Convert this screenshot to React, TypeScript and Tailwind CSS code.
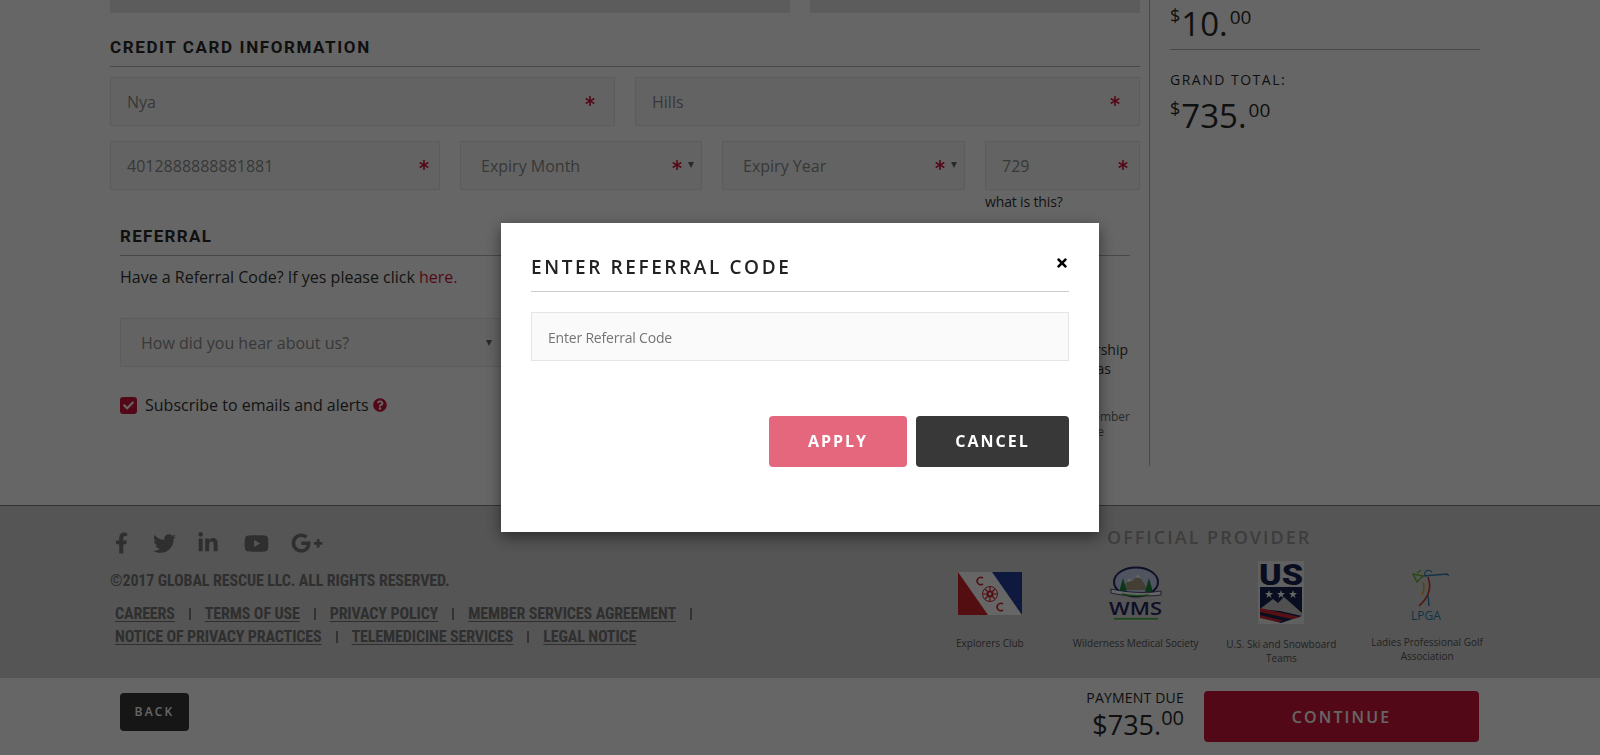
import { FaAsterisk, FaCheck, FaFacebookF, FaGooglePlusG, FaLinkedinIn, FaQuestionCircle, FaTimes, FaTwitter, FaYoutube } from "react-icons/fa";

function Req() {
  return <FaAsterisk className="text-[#d0163a] shrink-0" size={10} />;
}

function Caret() {
  return <span className="ml-[6px] w-0 h-0 border-x-[3px] border-x-transparent border-t-[6px] border-t-[#666] shrink-0" />;
}

function Field({ label, w, select, pad = "pl-[16px]", pr = "pr-[19px]" }: { label: string; w: string; select?: boolean; pad?: string; pr?: string }) {
  return (
    <div className={`${w} h-[49px] flex items-center ${pad} ${pr} bg-[#f8f8f8] border border-[#e5e5e5] text-[16px] text-[#8c8c8c]`}>
      <span className="flex-1">{label}</span>
      <span className="flex items-center -mt-[1px]">
        <Req />
        {select && <Caret />}
      </span>
    </div>
  );
}

function Price({ big, cents, dollarTop, centsTop }: { big: string; cents: string; dollarTop: string; centsTop: string }) {
  return (
    <div className="flex items-start font-medium text-[#2a2a2a]">
      <span className={`text-[18px] leading-[18px] ${dollarTop}`}>$</span>
      <span className="text-[33px] leading-[32px] ml-px">{big}.</span>
      <span className={`text-[19px] leading-[18px] ml-[2px] ${centsTop}`}>{cents}</span>
    </div>
  );
}

function Sep() {
  return <span className="mx-[14px] w-[2px] h-[12px] bg-[#808080]" />;
}

function FooterLink({ children }: { children: string }) {
  return <a className="underline underline-offset-2 decoration-1">{children}</a>;
}

function ExplorersLogo() {
  return (
    <svg width="64" height="43" viewBox="0 0 64 43" className="block">
      <rect width="64" height="43" fill="#fff" />
      <polygon points="0,0 30,43 0,43" fill="#d0252c" />
      <polygon points="34,0 64,0 64,43" fill="#27409f" />
      <circle cx="32" cy="22" r="7.5" fill="none" stroke="#d0252c" strokeWidth="1" />
      <circle cx="32" cy="22" r="3.6" fill="#d0252c" />
      <path d="M32 15v14M25 22h14M27 17l10 10M37 17l-10 10" stroke="#d0252c" strokeWidth="1.2" />
      <circle cx="32" cy="22" r="1.4" fill="#fff" />
      <path d="M25 6.2a3.6 3.6 0 1 0 0 5.6M45 32.2a3.6 3.6 0 1 0 0 5.6" fill="none" stroke="#d0252c" strokeWidth="1.5" />
    </svg>
  );
}

function WmsLogo() {
  return (
    <svg width="56" height="56" viewBox="0 0 56 56" className="block">
      <ellipse cx="28" cy="16" rx="22" ry="14.5" fill="#c6d2f0" stroke="#26265f" strokeWidth="2" />
      <path d="M14 24l7-12 4 3 5-7 10 16z" fill="#a89f86" />
      <path d="M18.5 16l2.5-4 3 2.5-2 1zM27 12l3-4 3 4.5-3-1z" fill="#fff" />
      <path d="M11 26l4-14 4 14zM37 26l4-14 4 14z" fill="#1d8a3e" />
      <path d="M3 23c14 3 32 5 50 2v4c-18 2-38 1-50-2z" fill="#fff" stroke="#26265f" strokeWidth="0.8" />
      <path d="M14 28c8 2 18 2 27 1" stroke="#3fae3a" strokeWidth="1.6" fill="none" />
      <text x="1" y="49" fontFamily="'Open Sans',sans-serif" fontWeight="600" fontSize="18" fill="#26265f" textLength="53" lengthAdjust="spacingAndGlyphs">WMS</text>
      <rect x="6" y="52" width="44" height="1.6" fill="#3fae3a" />
    </svg>
  );
}

function UsLogo() {
  return (
    <svg width="46" height="63" viewBox="0 0 46 63" className="block overflow-visible">
      <rect width="46" height="63" fill="#efefef" />
      <text x="1" y="24" fontFamily="'Roboto',sans-serif" fontWeight="900" fontSize="30" fill="#15254f" textLength="44" lengthAdjust="spacingAndGlyphs">US</text>
      <path d="M2 26h42v29L23 62 2 56z" fill="#15254f" />
      <g fill="#fff">
        <polygon points="11,29 12,32 15,32 12.6,34 13.5,37 11,35 8.5,37 9.4,34 7,32 10,32" />
        <polygon points="23,29 24,32 27,32 24.6,34 25.5,37 23,35 20.5,37 21.4,34 19,32 22,32" />
        <polygon points="35,29 36,32 39,32 36.6,34 37.5,37 35,35 32.5,37 33.4,34 31,32 34,32" />
      </g>
      <path d="M2 48l13-10 5 4 6-6 18 16v3L22 50z" fill="#c9c9c9" />
      <path d="M2 47l40 9-8 2L2 51zM2 54l24 6-7 1L2 57z" fill="#d42a34" />
    </svg>
  );
}

function LpgaLogo() {
  return (
    <svg width="44" height="60" viewBox="0 0 44 60" className="block">
      <path d="M18 11l24-2 2 2" stroke="#2b7fb0" strokeWidth="1.5" fill="none" />
      <path d="M20 10c-1-5 4-6 7-3" stroke="#2b7fb0" strokeWidth="1.2" fill="none" />
      <path d="M8 9l10 2-6 6z" fill="none" stroke="#6fb23c" strokeWidth="1.5" />
      <path d="M12 8l4-3" stroke="#6fb23c" strokeWidth="1.3" />
      <path d="M23 12c4 11 0 21-9 29" stroke="#d0382f" strokeWidth="1.6" fill="none" />
      <path d="M18 17c2 5 1 9-1 13" stroke="#e0a92c" strokeWidth="1.6" fill="none" />
      <path d="M23 30l1 11" stroke="#2b7fb0" strokeWidth="1.4" />
      <text x="21" y="55" textAnchor="middle" fontFamily="'Open Sans',sans-serif" fontSize="12" fill="#2b7fb0">LPGA</text>
    </svg>
  );
}

function Provider({ name, children, logoTop, capTop }: { name: string; children: React.ReactNode; logoTop: string; capTop: string }) {
  return (
    <div className="w-[146px] flex flex-col items-center px-[8px]">
      <div className={`h-[87px] ${logoTop}`}>{children}</div>
      <div className={`${capTop} text-[10px] leading-[14px] text-center text-[#555]`}>{name}</div>
    </div>
  );
}

export default function App() {
  return (
    <div className="h-screen overflow-hidden bg-white font-['Open_Sans',sans-serif] text-[#333]">
      <div className="flex h-[505px] pl-[110px]">
        <div className="w-[1030px]">
          <div className="flex gap-[20px] h-[13px]">
            <div className="w-[680px] bg-[#e6e6e6]" />
            <div className="flex-1 bg-[#e6e6e6]" />
          </div>
          <div className="h-[54px] flex items-end pb-[7px] border-b border-[#b5b5b5] font-['Roboto',sans-serif] font-bold text-[17px] leading-[24px] tracking-[1.6px] text-[#2a2a2a]">
            CREDIT CARD INFORMATION
          </div>
          <div className="flex gap-[20px] mt-[10px]">
            <Field label="Nya" w="w-[505px]" />
            <Field label="Hills" w="w-[505px]" />
          </div>
          <div className="flex gap-[20px] mt-[15px]">
            <Field label="4012888888881881" w="w-[330px]" pr="pr-[10px]" />
            <Field label="Expiry Month" w="w-[242px]" select pad="pl-[20px]" pr="pr-[7px]" />
            <Field label="Expiry Year" w="w-[243px]" select pad="pl-[20px]" pr="pr-[7px]" />
            <Field label="729" w="w-[155px]" pr="pr-[11px]" />
          </div>
          <div className="pl-[875px] mt-[2px] text-[14px] leading-[20px] tracking-[-0.15px] text-[#333]">what is this?</div>
          <div className="ml-[10px] mr-[10px]">
            <div className="h-[44px] flex items-end pb-[7px] border-b border-[#b5b5b5] font-['Roboto',sans-serif] font-bold text-[17px] leading-[24px] tracking-[1.3px] text-[#2a2a2a]">
              REFERRAL
            </div>
            <div className="flex justify-between">
              <div className="w-[400px]">
                <p className="mt-[10px] text-[16px] leading-[22px]">
                  Have a Referral Code? If yes please click <a className="text-[#d0163a]">here.</a>
                </p>
                <div className="mt-[30px] h-[49px] flex items-center justify-between pl-[20px] pr-[27px] bg-[#f8f8f8] border border-[#e5e5e5] text-[16px] text-[#8c8c8c]">
                  How did you hear about us?
                  <Caret />
                </div>
                <label className="mt-[29px] flex items-center text-[16px] leading-[18px]">
                  <span className="w-[17px] h-[17px] rounded-[3px] bg-[#d0163a] flex items-center justify-center">
                    <FaCheck className="text-white" size={11} />
                  </span>
                  <span className="ml-[8px]">Subscribe to emails and alerts</span>
                  <FaQuestionCircle className="ml-[4px] text-[#d0163a]" size={14} />
                </label>
              </div>
              <div className="pt-[84px] text-right">
                <div className="text-[14px] leading-[19px] mr-[2px]">membership</div>
                <div className="text-[14px] leading-[19px] mr-[19px]">as</div>
                <div className="mt-[31px] text-[12px] leading-[15px] text-[#666]">member</div>
                <div className="text-[12px] leading-[15px] text-[#666] mr-[26px]">the</div>
              </div>
            </div>
          </div>
        </div>
        <div className="ml-[9px] w-[331px] h-[466px] border-l border-[#b5b5b5] pl-[20px]">
          <div className="pt-[8px] h-[50px] border-b border-[#b5b5b5]">
            <Price big="10" cents="00" dollarTop="-mt-[2px]" centsTop="mt-0" />
          </div>
          <div className="mt-[20px] text-[14px] leading-[20px] tracking-[1.5px] text-[#2a2a2a]">GRAND TOTAL:</div>
          <div className="mt-[10px]">
            <Price big="735" cents="00" dollarTop="-mt-px" centsTop="mt-px" />
          </div>
        </div>
      </div>

      <footer className="h-[173px] bg-[#d4d4d4] border-t border-[#808080] flex">
        <div className="w-[917px] pl-[110px] pt-[26px] text-[#757575]">
          <div className="flex items-center pl-[5px] h-[22px]">
            <FaFacebookF size={22} className="w-[13px]" />
            <FaTwitter size={23} className="ml-[25px]" />
            <FaLinkedinIn size={22} className="ml-[21px]" />
            <FaYoutube size={25} className="ml-[25px]" />
            <FaGooglePlusG size={32} className="ml-[22px]" />
          </div>
          <div className="mt-[16px] font-['Roboto_Condensed','Roboto',sans-serif] font-bold text-[16px] leading-[22px] tracking-[-0.13px]">
            ©2017 GLOBAL RESCUE LLC. ALL RIGHTS RESERVED.
          </div>
          <div className="mt-[10px] pl-[5px] font-['Roboto_Condensed','Roboto',sans-serif] font-bold text-[16px] leading-[23px] tracking-[-0.13px]">
            <div className="flex items-center">
              <FooterLink>CAREERS</FooterLink>
              <Sep />
              <FooterLink>TERMS OF USE</FooterLink>
              <Sep />
              <FooterLink>PRIVACY POLICY</FooterLink>
              <Sep />
              <FooterLink>MEMBER SERVICES AGREEMENT</FooterLink>
              <Sep />
            </div>
            <div className="flex items-center">
              <FooterLink>NOTICE OF PRIVACY PRACTICES</FooterLink>
              <Sep />
              <FooterLink>TELEMEDICINE SERVICES</FooterLink>
              <Sep />
              <FooterLink>LEGAL NOTICE</FooterLink>
            </div>
          </div>
        </div>
        <div className="w-[583px] pt-[19px]">
          <div className="pl-[190px] font-semibold text-[18px] leading-[24px] tracking-[2px] text-[#999]">OFFICIAL PROVIDER</div>
          <div className="flex">
            <Provider name="Explorers Club" logoTop="pt-[23px]" capTop="mt-0">
              <ExplorersLogo />
            </Provider>
            <Provider name="Wilderness Medical Society" logoTop="pt-[17px]" capTop="mt-0">
              <WmsLogo />
            </Provider>
            <Provider name="U.S. Ski and Snowboard Teams" logoTop="pt-[12px]" capTop="mt-px">
              <UsLogo />
            </Provider>
            <Provider name="Ladies Professional Golf Association" logoTop="pt-[16px]" capTop="-mt-px">
              <LpgaLogo />
            </Provider>
          </div>
        </div>
      </footer>

      <div className="h-[77px] flex items-start pl-[120px] pr-[121px]">
        <button className="mt-[15px] w-[69px] h-[38px] rounded-[4px] bg-[#383838] text-white text-[12px] font-semibold tracking-[2.2px]">BACK</button>
        <div className="ml-auto mr-[20px] pt-[11px] flex flex-col items-end text-[#2a2a2a]">
          <div className="text-[14px] leading-[18px] tracking-[0.2px]">PAYMENT DUE</div>
          <div className="mt-[5px] flex items-start font-medium">
            <span className="text-[27px] leading-[26px]">$735.</span>
            <span className="text-[20px] leading-[19px] -mt-[4px]">00</span>
          </div>
        </div>
        <button className="mt-[13px] w-[275px] h-[51px] rounded-[4px] bg-[#d0163a] text-white text-[16px] font-semibold tracking-[2.1px]">CONTINUE</button>
      </div>

      <div className="fixed inset-0 bg-black/60 flex justify-center pt-[223px]">
        <div className="w-[598px] h-[309px] bg-white shadow-[0_5px_15px_rgba(0,0,0,0.5)] px-[30px]">
          <div className="h-[69px] pt-[32px] flex justify-between border-b border-[#ccc]">
            <h2 className="font-semibold text-[19px] leading-[24px] tracking-[2.6px] text-[#222]">ENTER REFERRAL CODE</h2>
            <FaTimes size={14} className="text-black mt-[1px]" />
          </div>
          <div className="mt-[20px] h-[49px] pl-[16px] pt-px flex items-center bg-[#fafafa] border border-[#e5e5e5] text-[14px] tracking-[-0.2px] text-[#757575]">
            Enter Referral Code
          </div>
          <div className="mt-[55px] flex justify-end gap-[9px]">
            <button className="w-[138px] h-[51px] pb-px rounded-[4px] bg-[#e5677d] text-white text-[16px] font-bold tracking-[2px]">APPLY</button>
            <button className="w-[153px] h-[51px] pb-px rounded-[4px] bg-[#383838] text-white text-[16px] font-bold tracking-[2px]">CANCEL</button>
          </div>
        </div>
      </div>
    </div>
  );
}
